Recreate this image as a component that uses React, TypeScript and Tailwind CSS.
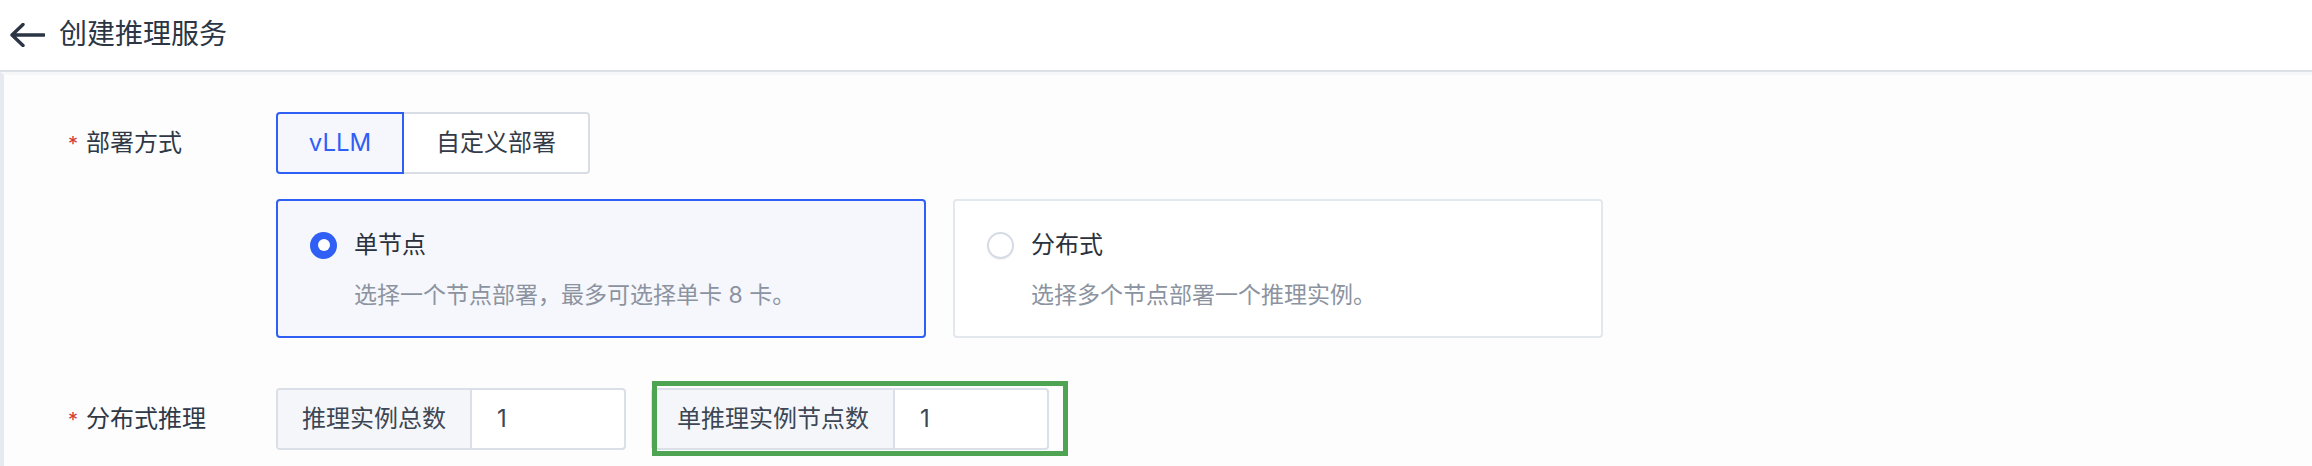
import { useState } from "react";

const FONT = "font-[Inter,'Noto_Sans_CJK_SC',sans-serif]";

function Label({ text }: { text: string }) {
  return (
    <div className="flex h-[62px] w-[272px] shrink-0 items-center pl-[64px]">
      <span className="mr-[8px] mt-[2px] text-[20px] leading-none text-[#d23a34]">*</span>
      <span className="text-[24px] leading-none text-[#2f3846]">{text}</span>
    </div>
  );
}

function Radio({ checked }: { checked: boolean }) {
  if (checked) {
    return (
      <span className="flex h-[27px] w-[27px] shrink-0 items-center justify-center rounded-full bg-[#2f5ff5]">
        <span className="h-[12px] w-[12px] rounded-full bg-white" />
      </span>
    );
  }
  return (
    <span className="h-[27px] w-[27px] shrink-0 rounded-full border-2 border-[#d5dbe5] bg-white shadow-[0_1px_2px_rgba(0,0,0,0.06)]" />
  );
}

function ModeCard({
  title,
  desc,
  checked,
  onClick,
}: {
  title: string;
  desc: string;
  checked: boolean;
  onClick: () => void;
}) {
  return (
    <div
      onClick={onClick}
      className={`h-[139px] w-[650px] cursor-pointer rounded-[4px] border-2 pl-[32px] pt-[30px] ${
        checked ? "border-[#2f5ff5] bg-[#f5f7fc]" : "border-[#e3e7ee] bg-white"
      }`}
    >
      <div className="flex h-[28px] items-center gap-[17px]">
        <Radio checked={checked} />
        <span className="text-[24px] leading-none text-[#2a313c]">{title}</span>
      </div>
      <div className="ml-[44px] mt-[22px] flex h-[28px] items-center text-[23px] leading-none text-[#8c93a0]">
        {desc}
      </div>
    </div>
  );
}

function InputGroup({ addon, value }: { addon: string; value: string }) {
  return (
    <div className="flex h-[62px] rounded-[4px] border-2 border-[#dadfe8] bg-white">
      <div className="flex items-center rounded-l-[3px] border-r-2 border-[#dadfe8] bg-[#f4f6f9] px-[24px] text-[24px] leading-none text-[#3d4654]">
        {addon}
      </div>
      <div className="flex w-[152px] items-center pl-[25px] text-[24px] leading-none text-[#3d4654]">
        {value}
      </div>
    </div>
  );
}

export default function App() {
  const [engine, setEngine] = useState("vllm");
  const [mode, setMode] = useState("single");

  return (
    <div className={`h-[466px] w-full overflow-hidden bg-white ${FONT}`}>
      {/* 顶部标题 */}
      <div className="flex h-[72px] items-center border-b-2 border-[#dde1e7] pb-[2px] pl-[10px]">
        <svg width="35" height="24" viewBox="0 0 35 24" fill="none" className="mt-[2px]">
          <path
            d="M2 12 H34 M13 1.5 L2 12 L13 22.5"
            stroke="#2b3544"
            strokeWidth="3.4"
            strokeLinecap="round"
            strokeLinejoin="round"
          />
        </svg>
        <span className="ml-[14px] text-[28px] leading-none text-[#2b3544]">创建推理服务</span>
      </div>

      <div className="h-full border-l-4 border-t-[3px] border-l-[#e6eaf0] border-t-[#f6f7f9] bg-[#fdfdfd] pt-[37px]">
        {/* 部署方式 */}
        <div className="flex">
          <Label text="部署方式" />
          <div className="flex flex-col">
            <div className="flex h-[62px] w-fit">
              <button
                onClick={() => setEngine("vllm")}
                className={`h-full w-[128px] rounded-l-[4px] border-2 text-[24px] ${
                  engine === "vllm"
                    ? "border-[#2f5ff5] bg-[#f5f7fc] text-[#2f5ff5]"
                    : "border-[#d9dee6] bg-white text-[#333b48]"
                }`}
              >
                vLLM
              </button>
              <button
                onClick={() => setEngine("custom")}
                className={`h-full w-[186px] rounded-r-[4px] border-2 border-l-0 text-[24px] ${
                  engine === "custom"
                    ? "border-[#2f5ff5] bg-[#f5f7fc] text-[#2f5ff5]"
                    : "border-[#d9dee6] bg-white text-[#333b48]"
                }`}
              >
                自定义部署
              </button>
            </div>
            <div className="mt-[25px] flex gap-[27px]">
              <ModeCard
                title="单节点"
                desc="选择一个节点部署，最多可选择单卡 8 卡。"
                checked={mode === "single"}
                onClick={() => setMode("single")}
              />
              <ModeCard
                title="分布式"
                desc="选择多个节点部署一个推理实例。"
                checked={mode === "dist"}
                onClick={() => setMode("dist")}
              />
            </div>
          </div>
        </div>

        {/* 分布式推理 */}
        <div className="mt-[50px] flex">
          <Label text="分布式推理" />
          <div className="flex gap-[25px]">
            <InputGroup addon="推理实例总数" value="1" />
            <div className="relative">
              <InputGroup addon="单推理实例节点数" value="1" />
              <div className="pointer-events-none absolute -bottom-[6px] -right-[19px] -top-[7px] left-[1px] border-[5px] border-[#4ea453]" />
            </div>
          </div>
        </div>
      </div>
    </div>
  );
}
